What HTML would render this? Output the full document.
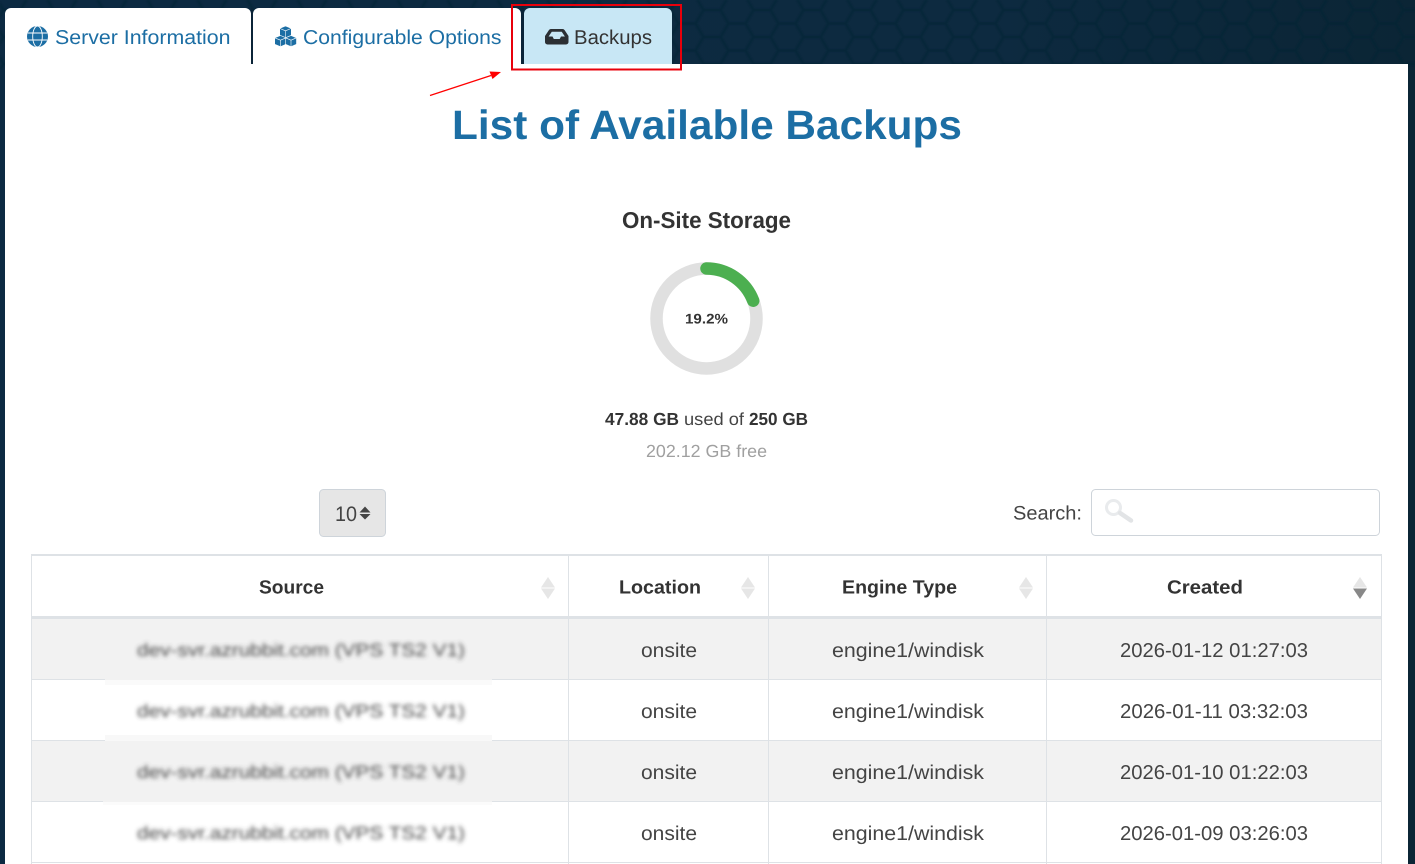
<!DOCTYPE html>
<html lang="en">
<head>
<meta charset="utf-8">
<title>List of Available Backups</title>
<style>
html,body{margin:0;padding:0;width:1415px;height:864px;overflow:hidden;background:#0b2435}
svg{display:block}
text{font-family:"Liberation Sans",sans-serif;text-rendering:geometricPrecision}
.tab{font-size:20px;fill:#1c6ea4}
.th{font-size:19px;font-weight:700;fill:#333}
.td{font-size:20px;fill:#444}
.bl{font-size:18px;fill:#444;filter:url(#blur)}
</style>
</head>
<body>
<svg width="1415" height="864" viewBox="0 0 1415 864" xmlns="http://www.w3.org/2000/svg">
<defs>
<pattern id="hex" width="50" height="27" patternUnits="userSpaceOnUse" patternTransform="translate(20.5,-3.5)">
<path d="M0 13.5L8 0H25L33 13.5L25 27H8ZM33 13.5H50" fill="none" stroke="#0a2030" stroke-opacity=".5" stroke-width="3"/>
</pattern>
<linearGradient id="bg" x1="0" x2="1" y1="0" y2="0">
<stop offset="0" stop-color="#0c2a42"/><stop offset=".7" stop-color="#0d2a40"/><stop offset="1" stop-color="#0b2535"/>
</linearGradient>
<filter id="blur" x="-5%" y="-80%" width="110%" height="260%"><feGaussianBlur stdDeviation="2"/></filter>
<filter id="soft" x="0" y="0" width="100%" height="100%"><feGaussianBlur stdDeviation=".8"/></filter>
</defs>

<!-- page background -->
<rect width="1415" height="864" fill="url(#bg)"/>
<rect width="1415" height="70" fill="url(#hex)" filter="url(#soft)"/>

<!-- panel -->
<rect x="5" y="64" width="1403" height="800" fill="#fff"/>

<!-- tabs -->
<path d="M5 64V14a6 6 0 0 1 6-6H245a6 6 0 0 1 6 6V64Z" fill="#fff"/>
<path d="M253 64V14a6 6 0 0 1 6-6H515a6 6 0 0 1 6 6V64Z" fill="#fff"/>
<path d="M524 64V14a6 6 0 0 1 6-6H666a6 6 0 0 1 6 6V64Z" fill="#c8e7f5"/>
<rect x="251" y="8" width="2" height="56" fill="#0b2438"/>
<rect x="521" y="8" width="3" height="56" fill="#0b2438"/>

<!-- globe icon -->
<circle cx="37.500" cy="36.500" r="10.500" fill="#1c6ea4"/>
<g fill="none" stroke="#fff" stroke-width=".9">
<ellipse cx="37.500" cy="36.500" rx="4.800" ry="10.500"/>
<path d="M27.800 33H47.200M27.800 40H47.200"/>
</g>
<text class="tab" x="55" y="44" textLength="175.500" lengthAdjust="spacingAndGlyphs">Server Information</text>

<!-- cubes icon -->
<g fill="#1c6ea4" stroke="#fff" stroke-width=".6" stroke-linejoin="round">
<path d="M285.500 26l5.800 2.400v7l-5.800 2.400-5.800-2.400v-7z"/>
<path d="M280.500 35.500l5.500 2.300v6.500l-5.500 2.400-5.800-2.400v-6.500z"/>
<path d="M291 35.500l5.500 2.300v6.500l-5.500 2.400-5.500-2.400v-6.500z"/>
<path d="M279.700 28.400l5.800 2.400 5.800-2.400M285.500 30.800v6.500M274.700 37.800l5.800 2.400 5.500-2.400M280.500 40.200v6.500M285.500 37.800l5.500 2.400 5.500-2.400M291 40.200v6.500" fill="none"/>
</g>
<text class="tab" x="303" y="44" textLength="198.500" lengthAdjust="spacingAndGlyphs">Configurable Options</text>

<!-- inbox icon -->
<path fill-rule="evenodd" fill="#2b2f33" d="M551 29H562.500a2.500 2.500 0 0 1 2.100 1.100L568.500 36V42a2.500 2.500 0 0 1-2.500 2.500H547.500A2.500 2.500 0 0 1 545 42V36L548.900 30.100A2.500 2.500 0 0 1 551 29ZM551.800 31.800L548.600 36.500H552.500L553.800 39H559.700L561 36.500H564.900L561.700 31.800Z"/>
<text class="tab" x="574" y="44" textLength="78" lengthAdjust="spacingAndGlyphs" style="fill:#333">Backups</text>

<!-- red annotation -->
<rect x="512" y="5" width="169" height="64.500" fill="none" stroke="#e8000b" stroke-width="2"/>
<path d="M430 95.500L491 75.500" stroke="#f00" stroke-width="1.300" fill="none"/>
<path d="M501 72L489.500 71.500L492.500 79Z" fill="#f00"/>

<!-- title -->
<text x="452" y="139" font-size="41" font-weight="700" fill="#1c6ea4" textLength="510" lengthAdjust="spacingAndGlyphs">List of Available Backups</text>

<!-- storage -->
<text x="622" y="228" font-size="23" font-weight="700" fill="#333" textLength="169" lengthAdjust="spacingAndGlyphs">On-Site Storage</text>
<circle cx="706.500" cy="318.500" r="50" fill="none" stroke="#e0e0e0" stroke-width="12.500"/>
<path d="M706.500 268.500A50 50 0 0 1 753.200 300.700" fill="none" stroke="#4caf50" stroke-width="12.500" stroke-linecap="round"/>
<text x="685" y="323.500" font-size="14" font-weight="700" fill="#333" textLength="43" lengthAdjust="spacingAndGlyphs">19.2%</text>

<text x="605" y="425" font-size="17.500" font-weight="700" fill="#333" textLength="74" lengthAdjust="spacingAndGlyphs">47.88 GB</text>
<text x="684" y="425" font-size="17.500" fill="#444" textLength="60" lengthAdjust="spacingAndGlyphs">used of</text>
<text x="749" y="425" font-size="17.500" font-weight="700" fill="#333" textLength="59" lengthAdjust="spacingAndGlyphs">250 GB</text>
<text x="646" y="457" font-size="17.500" fill="#a0a0a0" textLength="121" lengthAdjust="spacingAndGlyphs">202.12 GB free</text>

<!-- length select -->
<rect x="319.500" y="489.500" width="66" height="47" rx="4" fill="#e6e6e6" stroke="#ced4da"/>
<text x="335" y="521" font-size="21" fill="#444" textLength="22" lengthAdjust="spacingAndGlyphs">10</text>
<path d="M359.500 512.500L365 506.500L370.500 512.500ZM359.500 514H370.500L365 519.500Z" fill="#444"/>

<!-- search -->
<text x="1013" y="519.500" font-size="19.500" fill="#444" textLength="69" lengthAdjust="spacingAndGlyphs">Search:</text>
<rect x="1091.500" y="489.500" width="288" height="46" rx="4" fill="#fff" stroke="#ced4da"/>
<circle cx="1113.500" cy="507.500" r="7" fill="none" stroke="#e9ebed" stroke-width="3"/>
<path d="M1120 513L1131 520.500" stroke="#e2e4e6" stroke-width="4.500" stroke-linecap="round"/>

<!-- table -->
<rect x="31" y="619" width="1351" height="61" fill="#f2f2f2"/>
<rect x="31" y="741" width="1351" height="61" fill="#f2f2f2"/>

<!-- redaction smudges -->
<rect x="105" y="680" width="387" height="5" fill="#fafafa"/>
<rect x="105" y="735" width="387" height="6" fill="#f8f8f8"/>
<rect x="103" y="802" width="389" height="3" fill="#fbfbfb"/>

<g fill="#dee2e6">
<rect x="31" y="554" width="1351" height="2"/>
<rect x="31" y="616" width="1351" height="3"/>
<rect x="31" y="679" width="74" height="1"/><rect x="492" y="679" width="890" height="1"/>
<rect x="31" y="740" width="74" height="1"/><rect x="492" y="740" width="890" height="1"/>
<rect x="31" y="801" width="72" height="1"/><rect x="492" y="801" width="890" height="1"/>
<rect x="31" y="862" width="1351" height="1"/>
<rect x="31" y="554" width="1" height="310"/>
<rect x="568" y="554" width="1" height="310"/>
<rect x="768" y="554" width="1" height="310"/>
<rect x="1046" y="554" width="1" height="310"/>
<rect x="1381" y="554" width="1" height="310"/>
</g>

<text class="th" x="259" y="593.500" textLength="65" lengthAdjust="spacingAndGlyphs">Source</text>
<text class="th" x="619" y="593.500" textLength="82" lengthAdjust="spacingAndGlyphs">Location</text>
<text class="th" x="842" y="593.500" textLength="115" lengthAdjust="spacingAndGlyphs">Engine Type</text>
<text class="th" x="1167" y="593.500" textLength="76" lengthAdjust="spacingAndGlyphs">Created</text>

<g fill="#e6e6e6">
<path d="M541 587.500L548 577L555 587.500ZM541 588.500H555L548 599Z"/>
<path d="M741 587.500L748 577L755 587.500ZM741 588.500H755L748 599Z"/>
<path d="M1019 587.500L1026 577L1033 587.500ZM1019 588.500H1033L1026 599Z"/>
<path d="M1353 587.500L1360 577L1367 587.500Z"/>
</g>
<path d="M1353 588.500H1367L1360 599Z" fill="#888"/>

<!-- rows -->
<text class="bl" x="137" y="656" textLength="328" lengthAdjust="spacingAndGlyphs">dev-svr.azrubbit.com (VPS TS2 V1)</text>
<text class="td" x="641" y="657" textLength="56" lengthAdjust="spacingAndGlyphs">onsite</text>
<text class="td" x="832" y="657" textLength="152" lengthAdjust="spacingAndGlyphs">engine1/windisk</text>
<text class="td" x="1120" y="657" textLength="188" lengthAdjust="spacingAndGlyphs">2026-01-12 01:27:03</text>

<text class="bl" x="137" y="717" textLength="328" lengthAdjust="spacingAndGlyphs">dev-svr.azrubbit.com (VPS TS2 V1)</text>
<text class="td" x="641" y="718" textLength="56" lengthAdjust="spacingAndGlyphs">onsite</text>
<text class="td" x="832" y="718" textLength="152" lengthAdjust="spacingAndGlyphs">engine1/windisk</text>
<text class="td" x="1120" y="718" textLength="188" lengthAdjust="spacingAndGlyphs">2026-01-11 03:32:03</text>

<text class="bl" x="137" y="778" textLength="328" lengthAdjust="spacingAndGlyphs">dev-svr.azrubbit.com (VPS TS2 V1)</text>
<text class="td" x="641" y="779" textLength="56" lengthAdjust="spacingAndGlyphs">onsite</text>
<text class="td" x="832" y="779" textLength="152" lengthAdjust="spacingAndGlyphs">engine1/windisk</text>
<text class="td" x="1120" y="779" textLength="188" lengthAdjust="spacingAndGlyphs">2026-01-10 01:22:03</text>

<text class="bl" x="137" y="839" textLength="328" lengthAdjust="spacingAndGlyphs">dev-svr.azrubbit.com (VPS TS2 V1)</text>
<text class="td" x="641" y="840" textLength="56" lengthAdjust="spacingAndGlyphs">onsite</text>
<text class="td" x="832" y="840" textLength="152" lengthAdjust="spacingAndGlyphs">engine1/windisk</text>
<text class="td" x="1120" y="840" textLength="188" lengthAdjust="spacingAndGlyphs">2026-01-09 03:26:03</text>
</svg>
</body>
</html>
